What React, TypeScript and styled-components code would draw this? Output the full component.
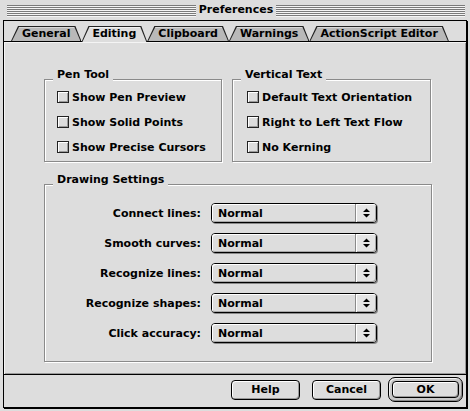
import styled, { createGlobalStyle } from 'styled-components';

const GlobalStyle = createGlobalStyle`
  html, body {
    margin: 0;
    padding: 0;
    background: #dddddd;
  }
  body {
    font-family: 'DejaVu Sans', 'Liberation Sans', sans-serif;
    color: #000;
  }
`;

const tabs = ['General', 'Editing', 'Clipboard', 'Warnings', 'ActionScript Editor'];
const activeTab = 'Editing';
const penOptions = ['Show Pen Preview', 'Show Solid Points', 'Show Precise Cursors'];
const verticalOptions = ['Default Text Orientation', 'Right to Left Text Flow', 'No Kerning'];
const drawingRows = ['Connect lines:', 'Smooth curves:', 'Recognize lines:', 'Recognize shapes:', 'Click accuracy:'];

export default function App() {
  return (
    <>
      <GlobalStyle />
      <Window>
        <TitleBar>
          <Stripes />
          <Title>Preferences</Title>
          <Stripes />
        </TitleBar>
        <Body>
          <TabRow>
            {tabs.map((t) => (
              <Tab key={t} $active={t === activeTab}>
                <TabLabel>{t}</TabLabel>
              </Tab>
            ))}
          </TabRow>
          <Panel>
            <TopRow>
              <GroupBox $width={178} $pad="11px 0 8px 12px">
                <GroupTitle>Pen Tool</GroupTitle>
                <CheckList>
                  {penOptions.map((o) => (
                    <CheckRow key={o}>
                      <CheckBox />
                      <span>{o}</span>
                    </CheckRow>
                  ))}
                </CheckList>
              </GroupBox>
              <GroupBox $width={199} $pad="11px 0 8px 14px">
                <GroupTitle>Vertical Text</GroupTitle>
                <CheckList>
                  {verticalOptions.map((o) => (
                    <CheckRow key={o}>
                      <CheckBox />
                      <span>{o}</span>
                    </CheckRow>
                  ))}
                </CheckList>
              </GroupBox>
            </TopRow>
            <GroupBox $width={388} $pad="18px 0 18px 0">
              <GroupTitle>Drawing Settings</GroupTitle>
              <SettingsGrid>
                {drawingRows.map((label) => (
                  <SettingRow key={label}>
                    <SettingLabel>{label}</SettingLabel>
                    <Popup>
                      <PopupValue>Normal</PopupValue>
                      <PopupArrows>
                        <svg width="7" height="10" viewBox="0 0 7 10">
                          <path d="M3.5 0.5L7 4H0z M0 6h7L3.5 9.5z" fill="#000" />
                        </svg>
                      </PopupArrows>
                    </Popup>
                  </SettingRow>
                ))}
              </SettingsGrid>
            </GroupBox>
          </Panel>
          <Footer>
            <Button>Help</Button>
            <Button>Cancel</Button>
            <DefaultRing>
              <Button $inner>OK</Button>
            </DefaultRing>
          </Footer>
        </Body>
      </Window>
    </>
  );
}

const Window = styled.div`
  width: 470px;
  height: 411px;
  box-sizing: border-box;
  display: flex;
  flex-direction: column;
  padding: 0 3px 3px 3px;
  background: #dddddd;
`;

const TitleBar = styled.div`
  height: 20px;
  display: flex;
  align-items: center;
  padding: 0 2px 0 4px;
`;

const Stripes = styled.div`
  flex: 1;
  height: 12px;
  margin-top: 1px;
  background: repeating-linear-gradient(to bottom, #7a7a7a 0 1px, #f4f4f4 1px 2px);
`;

const Title = styled.div`
  padding: 0 3px;
  font-size: 11px;
  font-weight: bold;
  line-height: 20px;
`;

const Body = styled.div`
  flex: 1;
  display: flex;
  flex-direction: column;
  border: 1px solid #000;
  box-shadow: 1px 1px 0 #000;
`;

const TabRow = styled.div`
  height: 20px;
  display: flex;
  align-items: flex-end;
  padding-left: 7px;
`;

const Tab = styled.div<{ $active?: boolean }>`
  position: relative;
  z-index: ${(p) => (p.$active ? 2 : 1)};
  height: ${(p) => (p.$active ? 16 : 15)}px;
  margin-bottom: ${(p) => (p.$active ? -1 : 0)}px;
  padding: 0 11px;
  display: flex;
  align-items: ${(p) => (p.$active ? 'flex-start' : 'center')};
  font-size: 11px;
  font-weight: bold;

  &::before,
  &::after {
    content: '';
    position: absolute;
    z-index: 0;
    clip-path: polygon(0 100%, 7px 0, calc(100% - 6px) 0, 100% 100%);
  }
  &::before {
    inset: 0;
    background: #222;
  }
  &::after {
    inset: 1px 1px 0 1px;
    background: ${(p) =>
      p.$active
        ? 'linear-gradient(to bottom, #f2f2f2 0 1px, #dddddd 1px)'
        : 'linear-gradient(to bottom, #d8d8d8 0 1px, #b9b9b9 1px)'};
  }
`;

const TabLabel = styled.span`
  position: relative;
  z-index: 1;
  line-height: 15px;
`;

const Panel = styled.div`
  height: 334px;
  box-sizing: border-box;
  border-top: 1px solid #000;
  border-bottom: 1px solid #000;
  padding: 37px 0 0 40px;
  box-shadow: inset 1px 1px 0 #f4f4f4, inset -1px -1px 0 #9a9a9a;
  display: flex;
  flex-direction: column;
  gap: 22px;
`;

const TopRow = styled.div`
  display: flex;
  gap: 10px;
`;

const GroupBox = styled.div<{ $width: number; $pad: string }>`
  position: relative;
  box-sizing: border-box;
  width: ${(p) => p.$width}px;
  padding: ${(p) => p.$pad};
  border: 1px solid #8a8a8a;
  box-shadow: inset 1px 1px 0 #fff, 1px 1px 0 #fff;
`;

const GroupTitle = styled.div`
  position: absolute;
  left: 8px;
  top: -12px;
  padding: 0 4px;
  background: #dddddd;
  font-size: 11px;
  font-weight: bold;
  line-height: 13px;
`;

const CheckList = styled.div`
  display: flex;
  flex-direction: column;
  gap: 13px;
`;

const CheckRow = styled.div`
  height: 12px;
  display: flex;
  align-items: center;
  gap: 3px;
  font-size: 11px;
  font-weight: bold;
  white-space: nowrap;
`;

const CheckBox = styled.span`
  width: 12px;
  height: 12px;
  box-sizing: border-box;
  flex: none;
  border: 1px solid #222;
  background: #dcdcdc;
  box-shadow: inset 1px 1px 0 #fff, inset -1px -1px 0 #9a9a9a;
`;

const SettingsGrid = styled.div`
  display: flex;
  flex-direction: column;
  gap: 10px;
`;

const SettingRow = styled.div`
  display: grid;
  grid-template-columns: 156px 166px;
  column-gap: 10px;
  align-items: center;
`;

const SettingLabel = styled.div`
  text-align: right;
  font-size: 11px;
  font-weight: bold;
  white-space: nowrap;
`;

const Popup = styled.div`
  height: 20px;
  box-sizing: border-box;
  display: flex;
  border: 1px solid #000;
  border-radius: 4px;
  background: #dddddd;
  box-shadow: 1px 1px 0 #8a8a8a;
`;

const PopupValue = styled.div`
  flex: 1;
  display: flex;
  align-items: center;
  padding-left: 6px;
  font-size: 11px;
  font-weight: bold;
  border-radius: 3px 0 0 3px;
  box-shadow: inset 1px 1px 0 #fff, inset 0 -1px 0 #a8a8a8;
`;

const PopupArrows = styled.div`
  width: 20px;
  display: flex;
  align-items: center;
  justify-content: center;
  border-left: 1px solid #8a8a8a;
  border-radius: 0 3px 3px 0;
  background: #e4e4e4;
  box-shadow: inset 1px 1px 0 #fff, inset -1px -1px 0 #a8a8a8;
`;

const Footer = styled.div`
  flex: 1;
  display: flex;
  align-items: center;
  justify-content: flex-end;
  gap: 12px;
  padding: 0 3px 3px 0;
`;

const Button = styled.div<{ $inner?: boolean }>`
  width: ${(p) => (p.$inner ? 67 : 69)}px;
  height: ${(p) => (p.$inner ? 17 : 20)}px;
  box-sizing: border-box;
  display: flex;
  align-items: center;
  justify-content: center;
  border: 1px solid #000;
  border-radius: 4px;
  background: #dddddd;
  box-shadow: inset 1px 1px 0 #fff, inset -1px -1px 0 #9a9a9a;
  font-size: 11px;
  font-weight: bold;
`;

const DefaultRing = styled.div`
  margin-left: -5px;
  padding: 3px;
  border: 1px solid #000;
  border-radius: 7px;
  background: #c8c8c8;
  box-shadow: inset 1px 1px 0 #f0f0f0, inset -1px -1px 0 #8a8a8a;
`;
